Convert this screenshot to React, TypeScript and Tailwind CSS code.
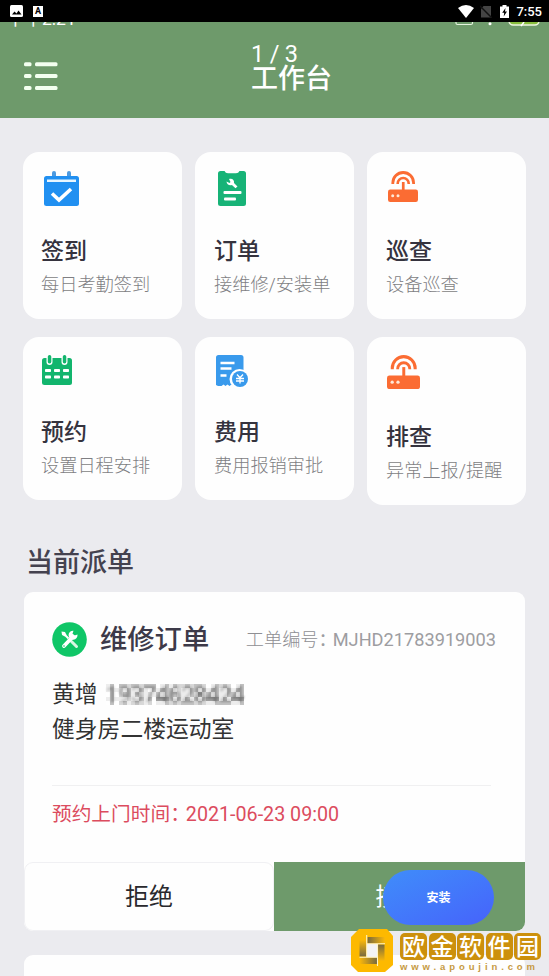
import type { ReactNode } from "react";

const GREEN = "#12b56d";
const ORANGE = "#fb6c33";

function CheckInIcon() {
  return (
    <svg width="35" height="35" viewBox="0 0 35 35">
      <rect x="8" y="0" width="4" height="7" rx="2" fill="#4d9ae0" />
      <rect x="23" y="0" width="4" height="7" rx="2" fill="#4d9ae0" />
      <rect x="0" y="5" width="35" height="30" rx="2.5" fill="#2190f1" />
      <rect x="3" y="8.5" width="29" height="2.5" fill="#e8f6ff" />
      <path d="M8 22.500l7 6.500L27 18" fill="none" stroke="#fff" strokeWidth="3.6" />
    </svg>
  );
}

function OrderIcon() {
  return (
    <svg width="28" height="35" viewBox="0 0 28 35">
      <path
        d="M2.5 0H6.500Q7.500 2.300 10 2.300H18Q20.500 2.300 21.500 0H25.500Q28 0 28 2.500V32.500Q28 35 25.500 35H2.500Q0 35 0 32.500V2.500Q0 0 2.500 0z"
        fill="#17b377"
      />
      <path
        d="M8.500 10.500l3 1.500 1-1-1.500-3c3.200-1 5.500 1 5 3.900l3.500 3.600-2 1.800-3.600-3.300c-2.900.7-5.200-.8-5.400-3.500z"
        fill="#fff"
      />
      <rect x="5.500" y="20" width="18" height="3" rx="1" fill="#fff" />
      <rect x="6" y="26.500" width="12" height="3" rx="1" fill="#fff" />
    </svg>
  );
}

function RouterIcon({ size }: { size: number }) {
  return (
    <svg width={size} height={size * 1.04} viewBox="0 0 30 31.2">
      <path d="M4.800 13v-1.100a10.400 10.400 0 0 1 20.800 0V13" fill="none" stroke={ORANGE} strokeWidth="2.800" />
      <path d="M9.700 13v-.500a5.500 5.500 0 0 1 11 0v.500" fill="none" stroke={ORANGE} strokeWidth="2.600" />
      <rect x="13.900" y="11" width="2.700" height="9" fill={ORANGE} />
      <rect x="0" y="18.600" width="30" height="12.400" rx="2.200" fill={ORANGE} />
      <circle cx="4.700" cy="24.700" r="1.500" fill="#ffe9d8" />
      <circle cx="10" cy="24.700" r="1.500" fill="#ffe9d8" />
    </svg>
  );
}

function ScheduleIcon() {
  return (
    <svg width="30" height="30" viewBox="0 0 30 30">
      <rect x="0" y="3" width="30" height="27" rx="2.500" fill={GREEN} />
      <rect x="4.500" y="-1" width="6" height="11" rx="3" fill="#fff" />
      <rect x="19.500" y="-1" width="6" height="11" rx="3" fill="#fff" />
      <rect x="5.800" y="0" width="3.500" height="8.500" rx="1.700" fill={GREEN} />
      <rect x="20.800" y="0" width="3.500" height="8.500" rx="1.700" fill={GREEN} />
      {[3, 12, 21].map((x) => (
        <g key={x} fill="#fff">
          <rect x={x} y="14" width="6" height="3" rx=".8" />
          <rect x={x} y="20.500" width="6" height="3" rx=".8" />
        </g>
      ))}
    </svg>
  );
}

function ExpenseIcon() {
  return (
    <svg width="33" height="33" viewBox="0 0 33 33">
      <path
        d="M2.500 0H25Q27.500 0 27.500 2.500V31H19l-1.500 0-2-1.500-2 1.500-2-1.500-2 1.500-2-1.500-2 1.500H2L0 30V2.500Q0 0 2.500 0z"
        fill="#399aec"
      />
      <path d="M4.500 8h14M4.500 13.500h11M4.500 20.500h6" stroke="#fff" strokeWidth="2.400" />
      <circle cx="23.500" cy="24" r="10" fill="#fff" />
      <circle cx="24" cy="24" r="8" fill="#399aec" />
      <path
        d="M21 19.500l3 3.200 3-3.200M20 23.500h8M20 26h8M24 23v5.500"
        fill="none"
        stroke="#fff"
        strokeWidth="1.300"
      />
    </svg>
  );
}

function RepairIcon() {
  return (
    <svg width="35" height="35" viewBox="0 0 35 35">
      <circle cx="17.500" cy="17.500" r="17.300" fill="#0fc667" />
      <path d="M11.500 11.500l5 5" stroke="#fff" strokeWidth="2" />
      <path d="M9.500 9.500l3.500.5 1.500 3-1.500 1.500-3-1.500z" fill="#fff" />
      <path d="M19.500 19.500l5 5" stroke="#d8f7e3" strokeWidth="3" strokeLinecap="round" />
      <path d="M12 24l9-9.500" stroke="#fff" strokeWidth="3.800" strokeLinecap="round" />
      <path d="M25.500 12.500a4.500 4.500 0 1 1-4-3.800l-1 3 2 1.800z" fill="#fff" />
      <circle cx="12" cy="24" r=".8" fill="#0fc667" />
    </svg>
  );
}

type Tile = {
  title: string;
  desc: string;
  icon: ReactNode;
  box: string;
  head: string;
};

const tiles: Tile[] = [
  { title: "签到", desc: "每日考勤签到", icon: <CheckInIcon />, box: "h-[167px] pt-[19px] pl-[18px]", head: "h-[64px] pl-[3px]" },
  { title: "订单", desc: "接维修/安装单", icon: <OrderIcon />, box: "h-[167px] pt-[19px] pl-[19px]", head: "h-[64px] pl-1" },
  { title: "巡查", desc: "设备巡查", icon: <RouterIcon size={30} />, box: "h-[167px] pt-[19px] pl-[19px]", head: "h-[64px] pl-[2px]" },
  { title: "预约", desc: "设置日程安排", icon: <ScheduleIcon />, box: "h-[163px] pt-[18px] pl-[18px]", head: "h-[61px] pl-[1px]" },
  { title: "费用", desc: "费用报销审批", icon: <ExpenseIcon />, box: "h-[163px] pt-[18px] pl-[19px]", head: "h-[61px] pl-[2px]" },
  { title: "排查", desc: "异常上报/提醒", icon: <RouterIcon size={33} />, box: "h-[168px] pt-[18px] pl-[19px]", head: "h-[66px] pl-[1px]" },
];

function StatusBar() {
  return (
    <div className="flex h-[22px] items-center bg-black pl-[10px] pr-[7px] text-white">
      <svg width="13" height="12" viewBox="0 0 13 12">
        <rect width="13" height="12" rx="1.500" fill="#fff" />
        <path d="M2 9.500l2.500-3 2 2 2-3 3 4z" fill="#000" />
      </svg>
      <span className="ml-[10px] flex h-[11px] w-[10px] items-center justify-center bg-white text-[9px] font-bold leading-none text-black">
        A
      </span>
      <svg className="ml-auto" width="16" height="13" viewBox="0 0 16 13">
        <path d="M0 3Q8-3 16 3L8 13z" fill="#fff" />
      </svg>
      <svg className="ml-[6px]" width="12" height="13" viewBox="0 0 12 13">
        <path d="M3.500 1H11v11.500H1V4z" fill="#444" />
        <path d="M0 1l12 12" stroke="#111" strokeWidth="1.500" />
      </svg>
      <svg className="ml-[8px]" width="9" height="13" viewBox="0 0 9 13">
        <path d="M2.500 0h4v1.500H9V13H0V1.500h2.500z" fill="#fff" />
        <path d="M5.500 3L2.200 7.800h2L3.700 11.500 7 6.500H5z" fill="#000" />
      </svg>
      <span className="ml-[7px] text-[13px] font-medium leading-none">7:55</span>
    </div>
  );
}

function Header() {
  return (
    <header className="relative h-24 overflow-hidden bg-[#6e9a6b] text-white">
      {/* the phone's own clock, mostly hidden under the status bar */}
      <div className="absolute -top-[13px] left-[7px] text-[17.500px] leading-5">下午2:21</div>
      <svg className="absolute right-2 top-0" width="86" height="5" viewBox="0 0 86 5">
        <path d="M1 0v1q0 1.500 1.500 1.500H16q1.500 0 1.500-1.500V0" fill="none" stroke="#e5f4df" strokeWidth="1.200" />
        <circle cx="35" cy="1.800" r="1.500" fill="#fff" />
        <path d="M54 0q1 3 4 3h22q3 0 4-3" fill="#87bd3d" stroke="#edf6df" strokeWidth="1.300" />
        <path d="M69 0l-3 4" stroke="#fff" strokeWidth="1.500" />
      </svg>
      <svg className="absolute left-6 top-[40px]" width="34" height="29" viewBox="0 0 34 29">
        {[0.3, 12, 24].map((y) => (
          <g key={y} fill="#f3fff0">
            <rect x="0" y={y} width="7.500" height="4" rx="1.500" />
            <rect x="11" y={y} width="22.500" height="4" rx="1.500" />
          </g>
        ))}
      </svg>
      <div className="pl-[251px] pt-5">
        <div className="text-[23.500px] leading-6 tracking-[-.2px]">1 / 3</div>
        <h1 className="-mt-[1px] text-[27px] font-medium leading-7">工作台</h1>
      </div>
    </header>
  );
}

// grey blocks that cover the phone number, three columns per digit
const mosaic = [
  "130332332333013132232332013232013",
  "131213113103133312113313133113133",
  "030233132121313332113242313113313",
  "131112113130444313131313444131444",
  "030231232120113232333232113333113",
];
const shades = ["#ffffff88", "#e4e4e4aa", "#c4c4c4aa", "#9a9a9a99", "#707070aa"];

function MaskedPhone() {
  return (
    <span className="relative inline-block h-[21px] w-[138px]">
      <span className="block whitespace-nowrap text-[22px] font-bold leading-[21px] text-[#888] blur-[1px]">
        19374628424
      </span>
      <svg className="absolute inset-0" width="138" height="21" viewBox="0 0 138 21" shapeRendering="crispEdges">
        {mosaic.map((row, y) =>
          row.split("").map((c, x) => (
            <rect key={`${x}-${y}`} x={x * 4.18} y={y * 4.2} width="4.180" height="4.200" fill={shades[Number(c)]} />
          ))
        )}
      </svg>
    </span>
  );
}

function OrderCard() {
  return (
    <section className="mx-6 mt-[11px] h-[339px] overflow-hidden rounded-[9px] bg-[#fefefe]">
      <div className="h-[270px] px-7 pt-[29px]">
        <div className="flex items-center">
          <RepairIcon />
          <h3 className="ml-[13px] pt-[2px] text-[27.300px] font-medium leading-[34px] text-[#3d3a49]">维修订单</h3>
          <div className="ml-auto whitespace-nowrap pr-[1px] pt-[2px] text-[18.200px] leading-6 text-[#9d9da1]">
            <span className="font-light text-[#8f8f93]">工单编号</span>
            <span className="tracking-[-4px]">：</span>MJHD21783919003
          </div>
        </div>
        <div className="mt-5 flex h-[35px] items-center gap-2 text-[22.800px] leading-[35px] text-[#333]">
          <span>黄增</span>
          <MaskedPhone />
        </div>
        <div className="text-[22.800px] leading-[35px] text-[#333]">健身房二楼运动室</div>
        <div className="mr-[6px] mt-[38px] border-t border-[#f0f0f1]" />
        <div className="mt-[15px] text-[19.700px] leading-7 text-[#dc4c5e]">
          预约上门时间<span className="tracking-[-4px]">：</span>2021-06-23 09:00
        </div>
      </div>
      <div className="flex h-[69px] text-[24px]">
        <button className="w-[250px] rounded-[9px] border border-[#f0f0f3] bg-[#fefefe] text-[#29292d]">拒绝</button>
        <button className="flex-1 bg-[#6e9a6b] text-white">接受</button>
      </div>
    </section>
  );
}

function Watermark() {
  return (
    <div className="absolute left-[351px] top-[929px] flex items-start">
      <svg width="42" height="43" viewBox="0 0 42 43">
        <defs>
          <linearGradient id="foldRight">
            <stop offset="0" stopColor="#77693f" />
            <stop offset="1" stopColor="#fbb808" />
          </linearGradient>
          <linearGradient id="foldLeft" x1="1" x2="0">
            <stop offset="0" stopColor="#77693f" />
            <stop offset="1" stopColor="#fbb808" />
          </linearGradient>
          <linearGradient id="foldUp" x1="0" x2="0" y1="1" y2="0">
            <stop offset="0" stopColor="#77693f" />
            <stop offset="1" stopColor="#fbb808" />
          </linearGradient>
          <linearGradient id="foldDown" x1="0" x2="0" y1="0" y2="1">
            <stop offset="0" stopColor="#77693f" />
            <stop offset="1" stopColor="#fbb808" />
          </linearGradient>
        </defs>
        <path d="M8 0H36L42 7V36L34 43H7L0 36V8z" fill="#fdb900" />
        <path d="M16 15H26.500v13.500H16z" fill="#f3f3f5" />
        <path d="M16.500 8H34v6.500H16.500z" fill="url(#foldRight)" />
        <path d="M8.500 28.500H26V35H8.500z" fill="url(#foldLeft)" />
        <path d="M8.500 11H15v16.500H8.500z" fill="url(#foldUp)" />
        <path d="M27 15.500h6.500V32H27z" fill="url(#foldDown)" />
        <path
          d="M15.700 28.500V6M26.500 14.500V37M34 14.800H16M8.500 28.200H27"
          fill="none"
          stroke="#fff3c4"
          strokeWidth="1.100"
        />
      </svg>
      <div className="ml-[7px] mt-[4px]">
        <div className="flex gap-[1.500px] text-[23px] font-medium leading-[27px] text-white">
          {["欧", "金", "软", "件", "园"].map((c) => (
            <span key={c} className="flex h-[27px] w-[27px] items-center justify-center rounded-[5px] bg-[#cc900c] pt-[2px]">
              {c}
            </span>
          ))}
        </div>
        <div className="whitespace-nowrap font-['Liberation_Sans'] text-[9.500px] font-bold leading-[14px] tracking-[3.900px] text-[#c69a43]">
          www.apoujin.com
        </div>
      </div>
    </div>
  );
}

export default function App() {
  return (
    <div className="relative h-[976px] w-[549px] overflow-hidden bg-[#ebebef] font-[Roboto,'Noto_Sans_CJK_SC',sans-serif]">
      <StatusBar />
      <Header />
      <main>
        <div className="ml-[23px] mt-[34px] grid w-[503px] grid-cols-3 items-start gap-x-[13px] gap-y-[18px]">
          {tiles.map((t) => (
            <div key={t.title} className={`rounded-[16px] bg-[#fefefe] ${t.box}`}>
              <div className={t.head}>{t.icon}</div>
              <h2 className="text-[23px] font-medium leading-[34px] text-[#35333e]">{t.title}</h2>
              <p className="whitespace-nowrap text-[18.200px] font-light leading-[32px] text-[#7f7f83]">{t.desc}</p>
            </div>
          ))}
        </div>
        <h2 className="ml-[26px] mt-[40px] text-[27px] font-medium leading-9 text-[#44424f]">当前派单</h2>
        <OrderCard />
        <section className="mx-6 mt-6 h-10 rounded-[9px] bg-[#fefefe]" />
      </main>
      <button className="absolute left-[383px] top-[870px] h-[55px] w-[111px] rounded-full bg-linear-to-br from-[#3f8dfa] to-[#4662fb] text-[12px] font-bold text-white">
        安装
      </button>
      <Watermark />
    </div>
  );
}
